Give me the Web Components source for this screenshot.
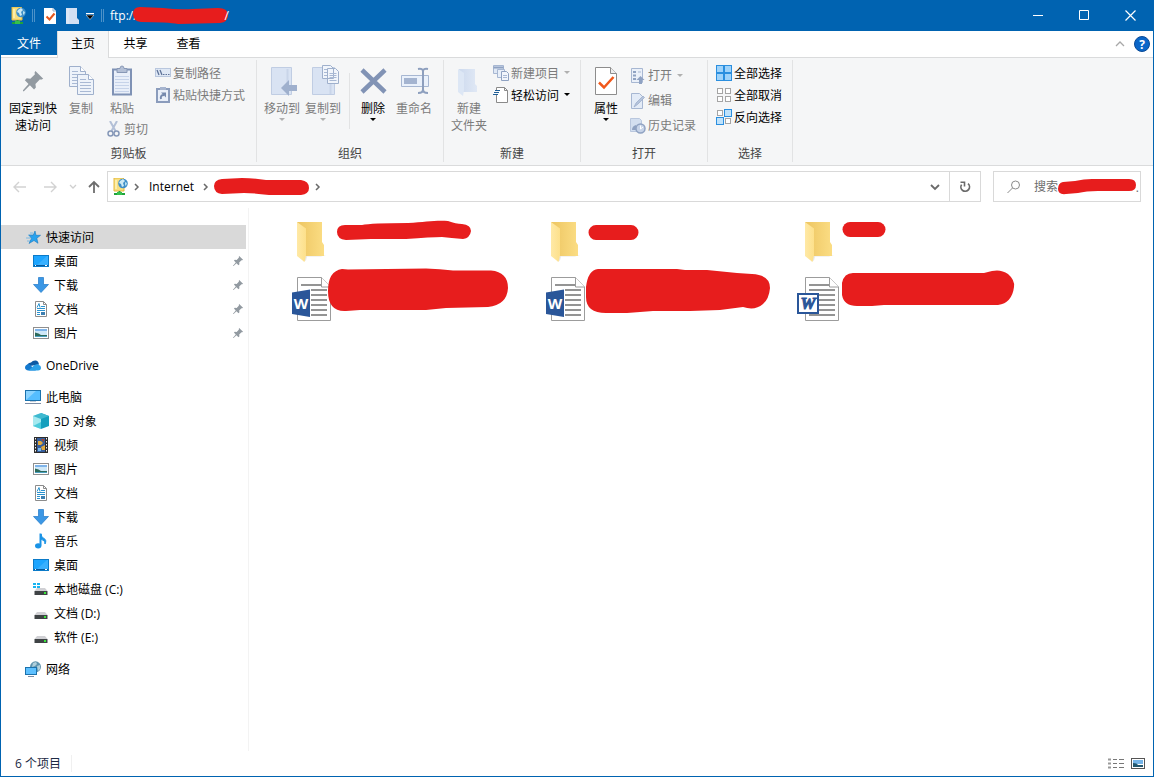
<!DOCTYPE html>
<html lang="zh-CN">
<head>
<meta charset="utf-8">
<title>ftp://</title>
<style>
  html, body { margin: 0; height: 100%; }
  body { font: 12px/17px "Open Sans", "Noto Sans CJK SC", sans-serif; color: #000; background: #fff; }
</style>
</head>
<body>
<explorer-window>
  <title-bar slot="title"></title-bar>

  <ribbon-tabs slot="tabs"></ribbon-tabs>

  <ribbon-bar slot="ribbon">
    <ribbon-group label="剪贴板" style="--w:256px">
      <big-button icon="pin" style="--bw:52px">固定到快<br>速访问</big-button>
      <ribbon-stack style="width:88px">
        <div style="display:flex;gap:3px">
          <big-button icon="copy" off>复制</big-button>
          <big-button icon="paste" off>粘贴</big-button>
        </div>
        <small-button icon="cut" off style="align-self:flex-end">剪切</small-button>
      </ribbon-stack>
      <ribbon-stack rows="22">
        <small-button icon="path" off>复制路径</small-button>
        <small-button icon="shortcut" off>粘贴快捷方式</small-button>
      </ribbon-stack>
    </ribbon-group>
    <ribbon-group label="组织" style="--w:187px">
      <big-button icon="moveto" off arrow>移动到</big-button>
      <big-button icon="copyto" off arrow>复制到</big-button>
      <ribbon-rule></ribbon-rule>
      <big-button icon="delete" arrow>删除</big-button>
      <big-button icon="rename" off>重命名</big-button>
    </ribbon-group>
    <ribbon-group label="新建" style="--w:137px">
      <big-button icon="newfolder" off>新建<br>文件夹</big-button>
      <ribbon-stack rows="22">
        <small-button icon="newitem" off arrow>新建项目</small-button>
        <small-button icon="easy" arrow>轻松访问</small-button>
      </ribbon-stack>
    </ribbon-group>
    <ribbon-group label="打开" style="--w:127px">
      <big-button icon="props" arrow>属性</big-button>
      <ribbon-stack rows="25">
        <small-button icon="open" off arrow>打开</small-button>
        <small-button icon="edit" off>编辑</small-button>
        <small-button icon="history" off>历史记录</small-button>
      </ribbon-stack>
    </ribbon-group>
    <ribbon-group label="选择" style="--w:85px">
      <ribbon-stack rows="22">
        <small-button icon="selall">全部选择</small-button>
        <small-button icon="selnone">全部取消</small-button>
        <small-button icon="selinv">反向选择</small-button>
      </ribbon-stack>
    </ribbon-group>
  </ribbon-bar>

  <address-row slot="address"></address-row>

  <nav-pane slot="nav">
    <nav-item icon="star" current>快速访问</nav-item>
    <nav-item icon="desktop" sub pinned>桌面</nav-item>
    <nav-item icon="download" sub pinned>下载</nav-item>
    <nav-item icon="document" sub pinned>文档</nav-item>
    <nav-item icon="picture" sub pinned>图片</nav-item>
    <nav-item icon="cloud" top>OneDrive</nav-item>
    <nav-item icon="pc" top>此电脑</nav-item>
    <nav-item icon="cube" sub>3D 对象</nav-item>
    <nav-item icon="video" sub>视频</nav-item>
    <nav-item icon="picture" sub>图片</nav-item>
    <nav-item icon="document" sub>文档</nav-item>
    <nav-item icon="download" sub>下载</nav-item>
    <nav-item icon="music" sub>音乐</nav-item>
    <nav-item icon="desktop" sub>桌面</nav-item>
    <nav-item icon="sysdrive" sub>本地磁盘 (C:)</nav-item>
    <nav-item icon="drive" sub>文档 (D:)</nav-item>
    <nav-item icon="drive" sub>软件 (E:)</nav-item>
    <nav-item icon="network" top>网络</nav-item>
  </nav-pane>

  <file-grid slot="files">
    <file-tile icon="folder" ink="f1"></file-tile>
    <file-tile icon="folder" ink="f2"></file-tile>
    <file-tile icon="folder" ink="f3"></file-tile>
    <file-tile icon="docx" ink="w1"></file-tile>
    <file-tile icon="docx" ink="w2"></file-tile>
    <file-tile icon="doc" ink="w3"></file-tile>
  </file-grid>

  <status-bar slot="status">6 个项目</status-bar>
</explorer-window>

<script>
/* setup runs on connection and again whenever a watched attribute changes */
const def = (name, html, setup, watch = []) => {
  const t = document.createElement('template');
  t.innerHTML = html;
  customElements.define(name, class extends HTMLElement {
    static get observedAttributes() { return watch; }
    constructor() {
      super();
      this.attachShadow({ mode: 'open' }).append(t.content.cloneNode(true));
    }
    connectedCallback() { if (setup) setup(this, this.shadowRoot); }
    attributeChangedCallback() { if (setup) setup(this, this.shadowRoot); }
  });
};

/* ---------- icons: [width, height, markup] ---------- */
const pinPath = '<path d="M13.500 0L22 8.500L19.500 9.500L18.500 9L13.500 14L14 18L12 20L7.500 15.500L1 22L0 22L0 21L6 14L2 10L4 8L8 8.500L13 3.500L12.500 2Z" fill="#929aa1"/>';
const page = (x, y) => `<path d="M${x + .5} ${y + .5}h11l5 5v15h-16z" fill="#eef3fa" stroke="#9fb0cc"/><path d="M${x + 11.5} ${y + .5}v5h5" fill="#fff" stroke="#9fb0cc"/><path d="M${x + 3} ${y + 8.5}h11M${x + 3} ${y + 11.500}h11M${x + 3} ${y + 14.500}h11M${x + 3} ${y + 17.500}h11M${x + 3} ${y + 5.500}h6" stroke="#a9b9d4"/>`;
const ftp = '<path d="M1 0h9l1 1v12h-10z" fill="#f7de80" stroke="#e5b93e"/><path d="M3 2v9" stroke="#fff3b8" stroke-width="1.500"/><circle cx="10" cy="5.500" r="4.800" fill="#3f8fc8"/><path d="M7 3l3-2 2 2-2 2 1 3-2 1-1-3-2-1z" fill="#cdeaf5"/><path d="M12 4l2 1-1 3-1-1z" fill="#b8e0f0"/><path d="M6.500 13v2M1 16h11" stroke="#20a33a" stroke-width="2"/><path d="M4 14h5v3h-5z" fill="#35c04d"/>';
const sq = (x, y, on) => `<rect x="${x + .5}" y="${y + .5}" width="7" height="7" fill="${on ? '#bfe2fb' : '#fff'}" stroke="${on ? '#2b8fdf' : '#a5a5a5'}"/>`;
const wordPage = '<path d="M9.500 2.500h24l9 9.500v33.500h-33z" fill="#fff" stroke="#9c9c9c"/><path d="M33.500 2.500v9.500h9" fill="#fff" stroke="#9c9c9c"/>';
const lines = (x1, x2, ys) => ys.map(y => `<path d="M${x1} ${y}h${x2 - x1}" stroke="#949494" stroke-width="2"/>`).join('');
const driveBody = '<path d="M4 7h8l2.500 3h-13z" fill="#d0d0d4"/><path d="M1.500 10h13v4h-13z" fill="#3f4345"/><rect x="11" y="11" width="2" height="2" fill="#39e639"/>';
const ICONS = {
  ftp: [16, 18, ftp],
  qprops: [14, 18, '<path d="M1 1h9l3 3v13h-12z" fill="#fff"/><path d="M10 1v3h3" fill="none" stroke="#9cb0c8"/><path d="M3.500 9.500l3 3 5-6" fill="none" stroke="#e4561d" stroke-width="2"/>'],
  qfolder: [14, 18, '<path d="M1 1h11v10l2 2v4h-13z" fill="#d3e0f3"/><path d="M1 1l3 1v15l-3-1z" fill="#dde7f6"/>'],
  qdrop: [8, 8, '<path d="M0 1.500h8" stroke="#fff"/><path d="M0 3h8l-4 4.500z" fill="#000" stroke="#fff" stroke-width=".5"/>'],
  min: [11, 11, '<path d="M0 5.500h10" stroke="#fff"/>'],
  max: [11, 11, '<path d="M.5.500h9v9h-9z" fill="none" stroke="#fff"/>'],
  close: [11, 11, '<path d="M.5.500l10 10M10.500.500l-10 10" stroke="#fff" stroke-width="1.200"/>'],
  collapse: [10, 6, '<path d="M1 5l4-4 4 4" fill="none" stroke="#a8a8a8" stroke-width="1.300"/>'],
  help: [16, 16, '<circle cx="8" cy="8" r="7.500" fill="#0a66c8" stroke="#0a4a96"/><text x="8" y="12.500" text-anchor="middle" font-family="Open Sans" font-size="12" font-weight="700" fill="#fff">?</text>'],
  pin: [32, 32, `<g transform="translate(6 6) scale(.92)">${pinPath}</g>`],
  smallpin: [10, 10, `<g transform="scale(.46)">${pinPath}</g>`],
  copy: [32, 32, page(4, 1) + page(12, 9)],
  paste: [32, 32, '<rect x="7" y="4.500" width="18" height="25" fill="#e9eff9" stroke="#7f92b5" stroke-width="2"/><path d="M11 3.500h3q0-2.500 2-2.500t2 2.500h3v4h-10z" fill="#b4c0d6" stroke="#8898b6"/><path d="M9 11.500h14M9 14.500h14M9 17.500h14M9 20.500h14M9 23.500h14M9 26.500h14" stroke="#c6d3e9"/>'],
  cut: [16, 16, '<path d="M4 0l5.500 10M11 0l-5.500 10" stroke="#b3c0d7" stroke-width="2"/><circle cx="4.500" cy="12.500" r="2.500" fill="none" stroke="#8698b8" stroke-width="1.500"/><circle cx="10.500" cy="12.500" r="2.500" fill="none" stroke="#8698b8" stroke-width="1.500"/>'],
  path: [16, 16, '<rect x=".5" y="3.500" width="15" height="8" fill="#dfe8f5" stroke="#b9c7de"/><path d="M2 5l2 5M5 5l2 5" stroke="#5e7399" stroke-width="1.300"/><path d="M8 9.500h1.500M10.500 9.500h1.500M13 9.500h1.500" stroke="#5e7399"/>'],
  shortcut: [16, 16, '<rect x="2" y="2" width="12" height="13" fill="#e9eff9" stroke="#8b9cbc" stroke-width="2"/><rect x="5" y="0" width="6" height="3" fill="#a7b5cf"/><path d="M6 12q-1-4 3-4" fill="none" stroke="#7589ad" stroke-width="2"/><path d="M6 5.500h5v5z" fill="#7589ad"/>'],
  moveto: [32, 32, '<path d="M5.500 2.500h20v27h-20z" fill="#d9e3f3" stroke="#c0cde3"/><path d="M21.500 4v25" stroke="#c9d5e9" stroke-width="2"/><path d="M15 23l8-8v5h8v6h-8v5z" fill="#9fb0cd"/>'],
  copyto: [32, 32, '<path d="M5.500 2.500h22v27h-22z" fill="#d9e3f3" stroke="#c0cde3"/><path d="M23.500 4v25" stroke="#c9d5e9" stroke-width="2"/><path d="M15.500.500h8l3 3v10h-11zM20.500 3.500h8l3 3v12h-11z" fill="#f1f5fb" stroke="#9fb0cc"/><path d="M17 4.500h3M17 7.500h3M17 10.500h3M22.500 8.500h7M22.500 10.500h7M22.500 12.500h7M22.500 15.500h7" stroke="#a9b9d4"/>'],
  delete: [32, 32, '<path d="M5 5l23 22M28 5l-23 22" stroke="#8193b5" stroke-width="4.500"/>'],
  rename: [32, 32, '<path d="M3.500 10.500h27v11h-27z" fill="#eaf1fb" stroke="#a7b7d2"/><rect x="6" y="13" width="13" height="6" fill="#a4b4d0"/><path d="M20 4q5-1 5 2.500v18q0 3.500-5 3.500M30 4q-5-1-5 2.500v18q0 3.500 5 3.500" fill="none" stroke="#8d9fbe" stroke-width="2"/>'],
  newfolder: [32, 32, '<defs><linearGradient id="nf"><stop offset="0" stop-color="#cddaee"/><stop offset="1" stop-color="#e0e8f5"/></linearGradient></defs><path d="M6 4h16v15l2 2v6h-16z" fill="url(#nf)"/><path d="M5 4l6 4v17l-1 6-5-4z" fill="#dde7f5"/>'],
  newitem: [16, 16, '<path d="M.5.500h10v8h-10z" fill="#dfe8f5" stroke="#a7b7d2"/><path d="M.5 2.500h10" stroke="#8fa2c2" stroke-width="2"/><path d="M4.500 4.500h7v8h-7z" fill="#e8eff9" stroke="#a7b7d2"/><path d="M8.500 6.500h5l2 2v7h-7z" fill="#f1f5fb" stroke="#8fa2c2"/><path d="M10 10.500h4M10 12.500h4" stroke="#a9b9d4"/>'],
  easy: [16, 16, '<path d="M3.500.500h8l3 3v12h-11z" fill="#fff" stroke="#8a8a8a"/><path d="M11.500.500v3h3" fill="none" stroke="#8a8a8a"/><path d="M0 3h6v5h-6z" fill="#f9fafb"/><path d="M2 3.500h5M1 5.500h5M0 7.500h5" stroke="#1f5e96"/>'],
  props: [32, 32, '<path d="M5.500 2.500h15l6 6v21h-21z" fill="#fff" stroke="#8d8d8d"/><path d="M20.500 2.500v6h6" fill="#eee" stroke="#8d8d8d"/><path d="M9 17.500l5 5 9.500-10.500" fill="none" stroke="#f1581a" stroke-width="2.500"/>'],
  open: [16, 16, '<path d="M1.500.500h11v14h-11z" fill="#eaf0f9" stroke="#a7b7d2"/><path d="M3 3h3v2h-3zM3 6.500h3v2h-3zM3 10h3v2h-3z" fill="#8fa2c2"/><path d="M8 4h3" stroke="#a7b7d2"/><path d="M10.500 8l4 4h-2.500v4h-3v-4h-2.500z" fill="#8fa2c2"/>'],
  edit: [16, 16, '<path d="M1.500.500h8l3 3v12h-11z" fill="#e3ebf7" stroke="#a7b7d2"/><path d="M4 14l2-4 7-7 1.500 1.500-7 7z" fill="#b4c3dc" stroke="#9aabc8" stroke-width=".7"/>'],
  history: [16, 16, '<path d="M.5.500h9l2 2v11h-11z" fill="#d3dff0" stroke="#b9c7de"/><circle cx="10.500" cy="10.500" r="4.500" fill="#c6d3e8" stroke="#8fa2c2" stroke-width="1.500"/><path d="M10.500 7.500v3.500l2.500-2" fill="none" stroke="#fff"/><path d="M2 12q0-4 4-5v5z" fill="#8fa2c2"/>'],
  selall: [16, 16, '<path d="M0 0h16v16h-16z" fill="#2b8fdf"/><path d="M1 1h6v6h-6zM9 1h6v6h-6zM1 9h6v6h-6zM9 9h6v6h-6z" fill="#9fd3fa"/>'],
  selnone: [16, 16, '<g transform="translate(1 1)">' + [[0, 0], [8, 0], [0, 8], [8, 8]].map(p => `<rect x="${p[0] + .5}" y="${p[1] + .5}" width="5" height="5" fill="#fff" stroke="#a5a5a5"/>`).join('') + '</g>'],
  selinv: [16, 16, '<rect x="1.500" y="1.500" width="5" height="5" fill="#fff" stroke="#a5a5a5"/>' + sq(8, 0, 1) + sq(0, 8, 1) + '<rect x="9.500" y="9.500" width="5" height="5" fill="#fff" stroke="#a5a5a5"/>'],
  back: [14, 12, '<path d="M1 6h12M6 1l-5 5 5 5" fill="none" stroke="#d2d2d2" stroke-width="1.400"/>'],
  forward: [14, 12, '<path d="M1 6h12M8 1l5 5-5 5" fill="none" stroke="#d2d2d2" stroke-width="1.400"/>'],
  recent: [8, 6, '<path d="M1 1l3 3 3-3" fill="none" stroke="#cfcfcf" stroke-width="1.300"/>'],
  up: [12, 14, '<path d="M6 13v-11M1 7l5-5 5 5" fill="none" stroke="#6e6e6e" stroke-width="1.800"/>'],
  crumb: [6, 8, '<path d="M1 1l3 3-3 3" fill="none" stroke="#6a6a6a" stroke-width="1.500"/>'],
  drop: [10, 8, '<path d="M1 2l4 4 4-4" fill="none" stroke="#6a6a6a" stroke-width="1.800"/>'],
  refresh: [12, 14, '<path d="M9 3.700A4.300 4.300 0 1 1 2.600 4.600" fill="none" stroke="#6a6a6a" stroke-width="1.700"/><path d="M1.500 2.300h4v4.200" fill="none" stroke="#6a6a6a" stroke-width="1.600"/>'],
  search: [14, 14, '<circle cx="8.500" cy="5" r="4" fill="none" stroke="#8b8b8b"/><path d="M5.500 8l-5 5" stroke="#8b8b8b"/>'],
  star: [16, 16, '<path d="M3 6h5M1 9h5M2 12h5M5 4h3" stroke="#7db9e2"/><path d="M10 2l1 4.300h4.500l-3.700 3 1.200 5-4-2.800-5 3 2.600-5.200-2.600-3h4.200z" fill="#28a2ee" stroke="#1879c0" stroke-width=".6"/>'],
  desktop: [16, 16, '<rect x=".5" y="2.500" width="15" height="11" fill="#1da5ff" stroke="#0b7ac8"/><path d="M4 12l10-9h1v9z" fill="#38b0ff"/><path d="M1 12.500h14" stroke="#07599c"/><path d="M2 12.500h1M12 12.500h2" stroke="#fff"/>'],
  download: [16, 16, '<path d="M5.500.500h5v7h5l-7.500 8-7.500-8h5z" fill="#3b97e5" stroke="#1f78c8" stroke-width=".7"/>'],
  document: [16, 16, '<path d="M2.500.500h8l3 3v12h-11z" fill="#fff" stroke="#8c8c8c"/><path d="M10.500.500v3h3" fill="none" stroke="#8c8c8c"/><path d="M4 6.500l2-4 1 4M8 5.500h4M4 7.500h8M4 9.500h8M4 11.500h3M4 13.500h3" fill="none" stroke="#2c93cf"/><rect x="8" y="11" width="4" height="3" fill="#3d7fb0"/>'],
  picture: [16, 16, '<rect x=".5" y="2.500" width="15" height="11" fill="#fff" stroke="#8f8f8f"/><rect x="2" y="4" width="12" height="8" fill="#cfe8f8"/><path d="M2 4h12v2h-12z" fill="#7fb4ea"/><path d="M2 7.500q4 .5 6 2.500h6v1h-12z" fill="#2c6a5b"/><path d="M2 11h12v1h-12z" fill="#4b9fc0"/>'],
  cloud: [16, 16, '<path d="M2 9.500q0-3.500 4-4 2-2.500 5-2 2.500.5 3 4z" fill="#0c59a4"/><path d="M3.500 13.500q-3.500-.5-3.500-3 0-3 4-3.500l7 6.500z" fill="#1479cf"/><path d="M3.500 13.500l6-5.500q3-1.500 4.500 0 2 .8 2 2.800 0 2.700-3 2.700z" fill="#2aa1e9"/>'],
  pc: [16, 16, '<rect x=".5" y="1.500" width="15" height="10" fill="#55bdff" stroke="#1b72ad"/><path d="M1 11l10-9h-10z" fill="#8bd3ff"/><path d="M0 14.500h16" stroke="#7c8da5"/><path d="M5 12.500h6" stroke="#c5ced9"/>'],
  cube: [16, 16, '<path d="M0 3l8-3v16l-8-3z" fill="#a5e9ef"/><path d="M16 3l-8-3v16l8-3z" fill="#159fbd"/><path d="M0 3l8-3 8 3-8 3z" fill="#3fb9d0"/><path d="M8 9v7l-8-3z" fill="#4ccbdb"/>'],
  video: [16, 16, '<rect x="1" y="0" width="14" height="16" fill="#2d2d2d"/><path d="M2.500 1v14M13.500 1v14" stroke="#f4f4f4" stroke-dasharray="1.500 1.500"/><rect x="4" y="1" width="8" height="14" fill="#365d9b"/><path d="M5 4h3l2 2-2 2h-3zM8 10l4-2v5h-3z" fill="#e2a93b"/><path d="M8 2h3v3z" fill="#a8432c"/><path d="M5 11h3v3h-3z" fill="#78b9ee"/>'],
  music: [16, 16, '<path d="M7.500.500v12" stroke="#1a93e6" stroke-width="2"/><path d="M8 1q0 3 3 4.500t1 5.500q1-3-4-5z" fill="#1a93e6" stroke="#1a93e6"/><ellipse cx="5.200" cy="12.800" rx="3.200" ry="2.600" fill="#1a93e6"/>'],
  drive: [16, 16, driveBody],
  sysdrive: [16, 16, driveBody + '<path d="M0 2h3v2h-3zM4 2h3v2h-3zM0 5h3v2h-3zM4 5h3v2h-3z" fill="#18b4f1"/>'],
  network: [16, 16, '<circle cx="10.500" cy="5.800" r="5.500" fill="#5f93ad"/><path d="M8 2l3-1 1 2-2 2-3 1zM12 5l3-1v4l-2 2z" fill="#b0cfdb"/><rect x=".5" y="6.500" width="11" height="7" fill="#5dc0ff" stroke="#1b72ad"/><path d="M3 15.500h6" stroke="#7c8da5"/>'],
  folder: [48, 48, '<defs><linearGradient id="fa"><stop offset="0" stop-color="#edc561"/><stop offset="1" stop-color="#fbdd84"/></linearGradient><linearGradient id="fb"><stop offset="0" stop-color="#ffe9a6"/><stop offset="1" stop-color="#fde08b"/></linearGradient></defs><path d="M18 36h20l-5 1.500h-14l-1 4-3 1z" fill="#e8e8e8"/><path d="M9 3h25v20l2 3v11h-20z" fill="url(#fa)"/><path d="M9 3l9 6.500v27l-1.500 6.500-7.500-6z" fill="url(#fb)"/>'],
  docx: [48, 48, wordPage + lines(13, 33, [10]) + lines(23, 39, [15, 20, 25, 30, 35, 40]) + '<path d="M4 17.500l18-3v27.500l-18-3z" fill="#2a5699"/><text x="13" y="34" text-anchor="middle" font-family="Open Sans" font-size="15" font-weight="700" fill="#fff">W</text>'],
  doc: [48, 48, wordPage + lines(13, 33, [10]) + lines(13, 39, [15]) + lines(23, 39, [20, 25, 30, 35]) + lines(13, 39, [40]) + '<rect x="2" y="19" width="20" height="19" fill="#fff" stroke="#2a5699" stroke-width="2"/><text x="12" y="34" text-anchor="middle" font-family="Liberation Serif" font-style="italic" font-size="17" font-weight="700" fill="#2a5699" stroke="#2a5699">W</text>'],
  viewlist: [16, 12, '<path d="M0 1.500h3M0 5.500h3M0 9.500h3" stroke="#999" stroke-width="2"/><path d="M5 1.500h4M5 5.500h4M5 9.500h4M11 1.500h5M11 5.500h5M11 9.500h5" stroke="#777"/>'],
  viewbig: [14, 12, '<rect x=".5" y=".5" width="13" height="10" fill="#fff" stroke="#555"/><path d="M2 2h10v4h-10z" fill="#74b4e8"/><path d="M2 5q4 0 5 2h5v2h-10z" fill="#23586f"/>'],
  menu: [6, 4, '<path d="M0 0h6l-3 3z" fill="currentColor"/>'],
};
def('ui-icon', '<style>:host{display:block;flex:none}svg{display:block}</style><svg aria-hidden="true"></svg>', (el, root) => {
  const icon = ICONS[el.getAttribute('name')];
  if (!icon) return;
  const [w, h, body] = icon;
  const svg = root.querySelector('svg');
  svg.setAttribute('width', w);
  svg.setAttribute('height', h);
  svg.setAttribute('viewBox', `0 0 ${w} ${h}`);
  svg.innerHTML = body;
}, ['name']);

/* ---------- marker strokes that hide private names ---------- */
const INK = {
  title: [95, 17, 'M7 0L30 1Q45 3 60 2L85 1Q95 1 95 8Q95 15 87 16L45 17Q35 15 8 15Q0 14 0 7Q0 0 7 0Z'],
  crumb: [95, 17, 'M8 1L28 0Q40 0 52 2L87 2Q95 3 95 10Q95 16 87 17L55 17Q40 15 30 15L8 16Q0 15 0 8Q0 2 8 1Z'],
  search: [78, 16, 'M5 3L17 2Q26 0 34 0H71Q78 0 78 6Q78 12 71 12H40Q28 12 20 14L8 15Q0 16 0 10Q0 4 5 3Z'],
  f1: [136, 48, 'M9 6H26Q35 4 72 4C90 3 100 1 112 2Q120 5 126 5Q135 6 135 12Q134 19 127 20Q115 19 106 18Q95 18 70 20H35L10 21Q1 20 1 13Q1 6 9 6Z'],
  f2: [136, 48, 'M6 6H41a7.500 7.500 0 0 1 0 15H6a7.500 7.500 0 0 1 0-15Z'],
  f3: [136, 48, 'M6 3H34a7.500 7.500 0 0 1 0 15H6a7.500 7.500 0 0 1 0-15Z'],
  w1: [136, 48, 'M6 -6L12 -5.500L90 -6.500Q104 -6 117 -4.500H155Q172 -3 172 13Q171 30 152 32L110 33L90 35H24L10 36Q-8 37 -8 16Q-8 -4 6 -6Z'],
  w2: [136, 48, 'M8 -6H87L95 -5L117 -5L147 -2L162 -1Q180 0 180 13Q179 24 173 29Q165 36 153 32L130 35L100 36H63L37 38H16Q-4 38 -4 22V12Q-2 -5 8 -6Z'],
  w3: [136, 48, 'M9 -2H140L148 -4Q157 -6 164 -1Q171 5 170 12Q168 28 154 30H40L28 31H13Q0 31 -2 20V8Q0 -2 9 -2Z'],
};
def('ink-mark', '<style>:host{display:block;flex:none}svg{display:block;overflow:visible}</style><svg aria-hidden="true"><path fill="#e71d1d"/></svg>', (el, root) => {
  const mark = INK[el.getAttribute('shape')];
  if (!mark) return;
  const [w, h, d] = mark;
  const svg = root.querySelector('svg');
  svg.setAttribute('width', w);
  svg.setAttribute('height', h);
  svg.firstChild.setAttribute('d', d);
}, ['shape']);

const BTN = 'button{font:inherit;color:inherit;background:none;border:0;padding:0;margin:0}';
const passIcon = (el, root) => root.querySelector('.i').setAttribute('name', el.getAttribute('icon'));

/* ---------- window frame ---------- */
def('explorer-window', `<style>
  :host{display:flex;flex-direction:column;min-height:100vh;box-sizing:border-box;border:1px solid #0063b1;border-top:0;background:#fff}
  main{flex:1;display:flex}
</style>
<slot name="title"></slot><slot name="tabs"></slot><slot name="ribbon"></slot><slot name="address"></slot>
<main><slot name="nav"></slot><slot name="files"></slot></main><slot name="status"></slot>`);

def('title-bar', `<style>${BTN}
  :host{display:flex;height:31px;background:#0063b1;color:#fff;align-items:center;padding-left:10px}
  .rule{width:1px;height:13px;border:solid #4c92c9;border-width:0 1px;margin:0 8px 0 5px}
  .quick{display:flex;gap:8px;align-items:center}
  .quick+button{margin-left:7px}
  .rule.end{margin:0 6px 0 7px}
  h1{font:inherit;margin:0;flex:1;display:flex;align-items:center}
  ink-mark{margin:0 -3px 0 -5px}
  .sys{display:flex;align-self:stretch}
  .sys button{width:46px;display:flex;align-items:center;justify-content:center}
</style>
<ui-icon name="ftp"></ui-icon><span class="rule"></span>
<div class="quick">
  <button aria-label="属性"><ui-icon name="qprops"></ui-icon></button>
  <button aria-label="新建文件夹"><ui-icon name="qfolder"></ui-icon></button>
</div>
<button aria-label="自定义快速访问工具栏"><ui-icon name="qdrop"></ui-icon></button>
<span class="rule end"></span>
<h1>ftp://<ink-mark shape="title"></ink-mark>/</h1>
<div class="sys">
  <button aria-label="最小化"><ui-icon name="min"></ui-icon></button>
  <button aria-label="最大化"><ui-icon name="max"></ui-icon></button>
  <button aria-label="关闭"><ui-icon name="close"></ui-icon></button>
</div>`);

def('ribbon-tabs', `<style>${BTN}
  :host{display:flex;height:27px;box-sizing:border-box;border-bottom:1px solid #dadbdc;align-items:flex-start}
  button{height:24px;width:53px}
  .file{width:56px;background:#0063b1;color:#fff}
  .on{width:52px;height:27px;background:#f5f6f7;border:solid #dadbdc;border-width:0 1px;padding-bottom:3px}
  .end{margin-left:auto;height:26px;display:flex;align-items:center;gap:9px;padding-right:3px}
  .end button{width:auto;height:auto}
</style>
<button class="file">文件</button><button class="on">主页</button><button>共享</button><button>查看</button>
<div class="end"><button aria-label="最小化功能区"><ui-icon name="collapse"></ui-icon></button><button aria-label="帮助"><ui-icon name="help"></ui-icon></button></div>`);

/* ---------- ribbon ---------- */
def('ribbon-bar', `<style>:host{display:flex;background:#f5f6f7;border-bottom:1px solid #dadbdc;padding:2px 0 3px}</style><slot></slot>`);
def('ribbon-group', `<style>
  :host{display:flex;flex-direction:column;box-sizing:border-box;width:var(--w);height:102px;border-right:1px solid #e2e3e4}
  .body{flex:1;min-height:0;display:flex;align-items:flex-start;gap:3px;padding-left:6px;white-space:nowrap}
  .label{text-align:center;color:#444}
</style><div class="body"><slot></slot></div><div class="label"></div>`, (el, root) => {
  root.querySelector('.label').textContent = el.getAttribute('label');
});
def('ribbon-rule', `<style>:host{display:block;width:1px;height:56px;background:#e2e3e4;margin:13px 1px 0 4px}</style>`);
def('ribbon-stack', `<style>
  :host{display:flex;flex-direction:column;align-items:flex-start;--row:24px}
  :host([rows="22"]){--row:22px;padding-top:2px}
  :host([rows="25"]){--row:25px;padding-top:3px}
</style><slot></slot>`);
def('big-button', `<style>${BTN}
  :host{display:block}
  :host([off]){color:#7b7b7b}
  button{width:var(--bw,38px);padding-top:5px;display:flex;flex-direction:column;align-items:center;white-space:nowrap}
  .t{margin-top:3px}
  .m{display:none;margin-top:1px}
  :host([off]) .m{color:#b0b0b0}
  :host([arrow]) .m{display:block}
</style><button><ui-icon class="i"></ui-icon><span class="t"><slot></slot></span><ui-icon class="m" name="menu"></ui-icon></button>`, passIcon);
def('small-button', `<style>${BTN}
  :host{display:block}
  :host([off]){color:#7b7b7b}
  button{height:var(--row);padding:0 2px;display:flex;gap:2px;align-items:center;white-space:nowrap}
  .m{display:none;margin-left:3px}
  :host([off]) .m{color:#b0b0b0}
  :host([arrow]) .m{display:block}
</style><button><ui-icon class="i"></ui-icon><span><slot></slot></span><ui-icon class="m" name="menu"></ui-icon></button>`, passIcon);

/* ---------- address row ---------- */
def('address-row', `<style>${BTN}
  :host{display:flex;height:42px;align-items:flex-start;padding:5px 12px 0;box-sizing:border-box}
  .go{display:flex;align-items:center;height:31px}
  .go button:nth-child(2){margin-left:16px}
  .go button:nth-child(3){margin-left:12px}
  .go button:nth-child(4){margin:0 7px 0 11px}
  .box{flex:1;min-width:0;display:flex;align-items:center;height:31px;box-sizing:border-box;border:1px solid #d9d9d9}
  .box>ui-icon{margin:0 5px}
  .crumbs{display:flex;align-items:center;flex:1}
  .crumbs a{color:inherit;text-decoration:none;margin:0 9px}
  .crumbs ink-mark{margin:0 6px 0 5px}
  .dd{width:29px;display:flex;justify-content:center}
  .re{width:31px;align-self:stretch;border-left:1px solid #d9d9d9;display:flex;align-items:center;justify-content:center}
  .find{position:relative;display:flex;align-items:center;width:148px;height:31px;box-sizing:border-box;border:1px solid #d9d9d9;margin-left:12px;padding-left:13px}
  input{flex:1;min-width:0;font:inherit;border:0;outline:0;padding:0;margin-left:13px;background:none}
  input::placeholder{color:#6d6d6d;opacity:1}
  .hide{position:absolute;right:1px;top:7px;display:flex;color:#6d6d6d}
</style>
<div class="go">
  <button aria-label="后退"><ui-icon name="back"></ui-icon></button><button aria-label="前进"><ui-icon name="forward"></ui-icon></button>
  <button aria-label="最近位置"><ui-icon name="recent"></ui-icon></button><button aria-label="向上"><ui-icon name="up"></ui-icon></button>
</div>
<div class="box"><ui-icon name="ftp"></ui-icon>
  <nav class="crumbs"><ui-icon name="crumb"></ui-icon><a href="#">Internet</a><ui-icon name="crumb"></ui-icon><ink-mark shape="crumb"></ink-mark><ui-icon name="crumb"></ui-icon></nav>
  <button class="dd" aria-label="以前的位置"><ui-icon name="drop"></ui-icon></button>
  <button class="re" aria-label="刷新"><ui-icon name="refresh"></ui-icon></button>
</div>
<label class="find"><ui-icon name="search"></ui-icon><input type="text" aria-label="搜索" placeholder="搜索"><span class="hide"><ink-mark shape="search"></ink-mark>.</span></label>`);

/* ---------- navigation pane ---------- */
def('nav-pane', `<style>:host{display:block;width:248px;box-sizing:border-box;flex:none;padding:17px 2px 0 0;border-right:1px solid #f3f3f3}</style><nav><slot></slot></nav>`);
def('nav-item', `<style>
  :host{display:block}
  :host([top]){margin-top:8px}
  a{display:flex;align-items:center;gap:5px;height:24px;padding:0 3px 0 24px;color:inherit;text-decoration:none}
  :host([sub]) a{padding-left:32px}
  :host([current]) a{background:#d9d9d9}
  span{flex:1}
  .p{display:none}
  :host([pinned]) .p{display:block}
</style><a href="#"><ui-icon class="i"></ui-icon><span><slot></slot></span><ui-icon class="p" name="smallpin"></ui-icon></a>`, passIcon);

/* ---------- files ---------- */
def('file-grid', `<style>:host{flex:1;display:grid;grid-template-columns:repeat(auto-fill,254px);grid-auto-rows:56px;align-content:start;padding:7px 0 0 33px}</style><slot></slot>`);
def('file-tile', `<style>:host{display:flex;padding:4px 6px}</style><ui-icon class="i"></ui-icon><ink-mark></ink-mark>`, (el, root) => {
  passIcon(el, root);
  root.querySelector('ink-mark').setAttribute('shape', el.getAttribute('ink'));
});

def('status-bar', `<style>${BTN}
  :host{display:flex;align-items:center;height:25px;padding:0 8px 0 14px;color:#1c2a44}
  .n{padding-right:10px;border-right:1px solid #f0f0f0;flex:none}
  .v{margin-left:auto;display:flex;gap:7px}
</style><span class="n"><slot></slot></span>
<div class="v"><button aria-label="详细信息"><ui-icon name="viewlist"></ui-icon></button><button aria-label="大图标"><ui-icon name="viewbig"></ui-icon></button></div>`);
</script>
</body>
</html>
